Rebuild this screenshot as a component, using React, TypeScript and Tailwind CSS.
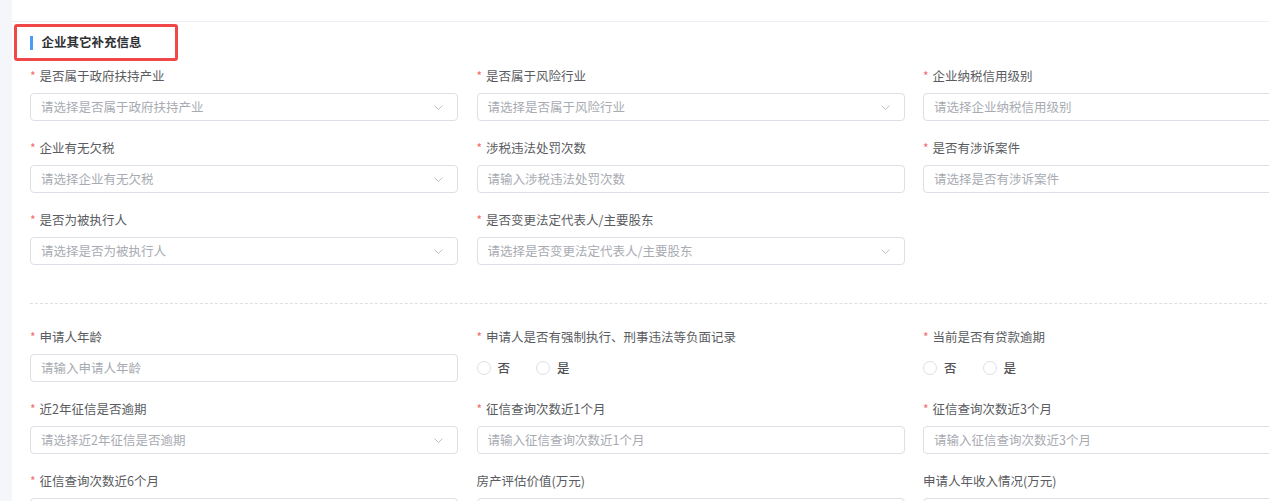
import React from 'react';

type Field = {
  label: string;
  required?: boolean;
  kind: 'select' | 'input' | 'radio' | 'empty';
  placeholder?: string;
};

const topRows: Field[][] = [
  [
    { label: '是否属于政府扶持产业', required: true, kind: 'select', placeholder: '请选择是否属于政府扶持产业' },
    { label: '是否属于风险行业', required: true, kind: 'select', placeholder: '请选择是否属于风险行业' },
    { label: '企业纳税信用级别', required: true, kind: 'select', placeholder: '请选择企业纳税信用级别' },
  ],
  [
    { label: '企业有无欠税', required: true, kind: 'select', placeholder: '请选择企业有无欠税' },
    { label: '涉税违法处罚次数', required: true, kind: 'input', placeholder: '请输入涉税违法处罚次数' },
    { label: '是否有涉诉案件', required: true, kind: 'select', placeholder: '请选择是否有涉诉案件' },
  ],
  [
    { label: '是否为被执行人', required: true, kind: 'select', placeholder: '请选择是否为被执行人' },
    { label: '是否变更法定代表人/主要股东', required: true, kind: 'select', placeholder: '请选择是否变更法定代表人/主要股东' },
    { label: '', kind: 'empty' },
  ],
];

const bottomRows: Field[][] = [
  [
    { label: '申请人年龄', required: true, kind: 'input', placeholder: '请输入申请人年龄' },
    { label: '申请人是否有强制执行、刑事违法等负面记录', required: true, kind: 'radio' },
    { label: '当前是否有贷款逾期', required: true, kind: 'radio' },
  ],
  [
    { label: '近2年征信是否逾期', required: true, kind: 'select', placeholder: '请选择近2年征信是否逾期' },
    { label: '征信查询次数近1个月', required: true, kind: 'input', placeholder: '请输入征信查询次数近1个月' },
    { label: '征信查询次数近3个月', required: true, kind: 'input', placeholder: '请输入征信查询次数近3个月' },
  ],
  [
    { label: '征信查询次数近6个月', required: true, kind: 'input', placeholder: '请输入征信查询次数近6个月' },
    { label: '房产评估价值(万元)', kind: 'input', placeholder: '请输入房产评估价值(万元)' },
    { label: '申请人年收入情况(万元)', kind: 'input', placeholder: '请输入申请人年收入情况(万元)' },
  ],
];

const Chevron = () => (
  <svg width="11" height="11" viewBox="0 0 12 12" fill="none" className="text-[#b8bcc4]">
    <path d="M2 4.2 6 8.2 10 4.2" stroke="currentColor" strokeWidth="1" strokeLinecap="round" strokeLinejoin="round" />
  </svg>
);

const Radio = ({ text }: { text: string }) => (
  <label className="flex items-center gap-[7px] mr-[26px]">
    <span className="w-[14px] h-[14px] rounded-full border border-[#dcdfe6] bg-white" />
    <span className="text-[#505256] font-medium">{text}</span>
  </label>
);

const FormItem: React.FC<{ field: Field }> = ({ field }) => {
  if (field.kind === 'empty') return <div />;
  return (
    <div className="flex flex-col">
      <div className="h-[18px] leading-[18px] flex items-center text-[#5a5c61]">
        {field.required && <span className="text-[#f56c6c] mr-[4px] text-[12px] leading-none">*</span>}
        {field.label}
      </div>
      <div className="mt-[8px] h-[28px]">
        {field.kind === 'radio' ? (
          <div className="h-full flex items-center">
            <Radio text="否" />
            <Radio text="是" />
          </div>
        ) : (
          <div className="h-full flex items-center justify-between rounded-[4px] border border-[#dcdfe6] bg-white pl-[10px] pr-[13px]">
            <span className="text-[#a8abb2]">{field.placeholder}</span>
            {field.kind === 'select' && <Chevron />}
          </div>
        )}
      </div>
    </div>
  );
};

const Rows: React.FC<{ rows: Field[][] }> = ({ rows }) => (
  <div className="flex flex-col gap-[18px]">
    {rows.map((row, i) => (
      <div key={i} className="grid grid-cols-[428px_428px_428px] gap-x-[18.5px]">
        {row.map((f, j) => (
          <FormItem key={j} field={f} />
        ))}
      </div>
    ))}
  </div>
);

export default function App() {
  return (
    <div
      className="w-[1269px] h-[501px] overflow-hidden flex bg-[#f5f6f9] text-[12.5px]"
      style={{ fontFamily: '"Noto Sans CJK SC", "Noto Sans", sans-serif' }}
    >
      <div className="w-[12px] shrink-0" />
      <div className="flex-1 bg-white min-w-0">
        <div className="h-[21px]" />
        <div className="w-[1400px] border-t border-[#ebeef5]">
          <div className="pl-[2px] pt-[2px]">
            <div className="w-[164px] h-[37px] rounded-[3px] border-[3px] border-[#f04848] flex items-center pl-[13px]">
              <span className="w-[2.5px] h-[14px] bg-[#4a9cf6] mr-[9px]" />
              <span className="font-bold text-[#303133]">企业其它补充信息</span>
            </div>
          </div>
          <div className="pl-[18px] pt-[6px]">
            <Rows rows={topRows} />
            <div className="mt-[38px] border-t border-dashed border-[#dcdfe6]" />
            <div className="pt-[24px]">
              <Rows rows={bottomRows} />
            </div>
          </div>
        </div>
      </div>
    </div>
  );
}
